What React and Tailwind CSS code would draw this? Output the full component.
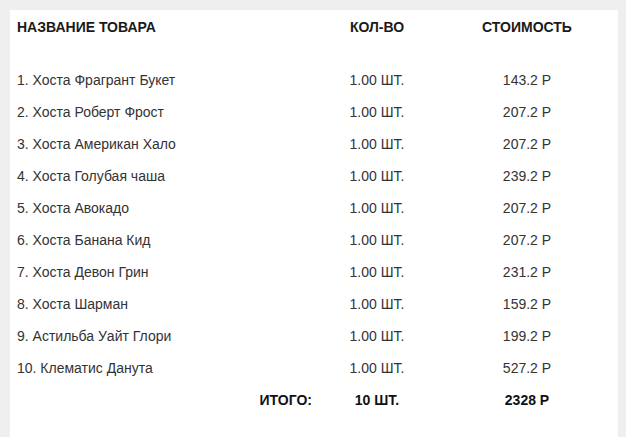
export default function App() {
  const items = [
    ["1. Хоста Фрагрант Букет", "143.2 Р"],
    ["2. Хоста Роберт Фрост", "207.2 Р"],
    ["3. Хоста Американ Хало", "207.2 Р"],
    ["4. Хоста Голубая чаша", "239.2 Р"],
    ["5. Хоста Авокадо", "207.2 Р"],
    ["6. Хоста Банана Кид", "207.2 Р"],
    ["7. Хоста Девон Грин", "231.2 Р"],
    ["8. Хоста Шарман", "159.2 Р"],
    ["9. Астильба Уайт Глори", "199.2 Р"],
    ["10. Клематис Данута", "527.2 Р"],
  ];
  const cols = "grid grid-cols-[295px_130px_170px]";
  return (
    <div className="min-h-[437px] bg-[#efefef] pt-[10px] pl-[10px] pr-[8px] font-['Liberation_Sans',Arial,sans-serif] text-[14px]">
      <div className="bg-white min-h-[427px] pl-[7px] pr-[6px] pt-[1px]">
        <div className={`${cols} h-[32px] items-center font-bold text-[#1a1a1a] uppercase`}>
          <div>Название товара</div>
          <div className="text-center">Кол-во</div>
          <div className="text-center">Стоимость</div>
        </div>
        <div className="h-[21px]" />
        {items.map(([name, price]) => (
          <div key={name} className={`${cols} h-[32px] items-center text-[#333]`}>
            <div>{name}</div>
            <div className="text-center">1.00 ШТ.</div>
            <div className="text-center">{price}</div>
          </div>
        ))}
        <div className={`${cols} h-[32px] items-center font-bold text-[#111]`}>
          <div className="text-right">ИТОГО:</div>
          <div className="text-center">10 ШТ.</div>
          <div className="text-center">2328 Р</div>
        </div>
      </div>
    </div>
  );
}
